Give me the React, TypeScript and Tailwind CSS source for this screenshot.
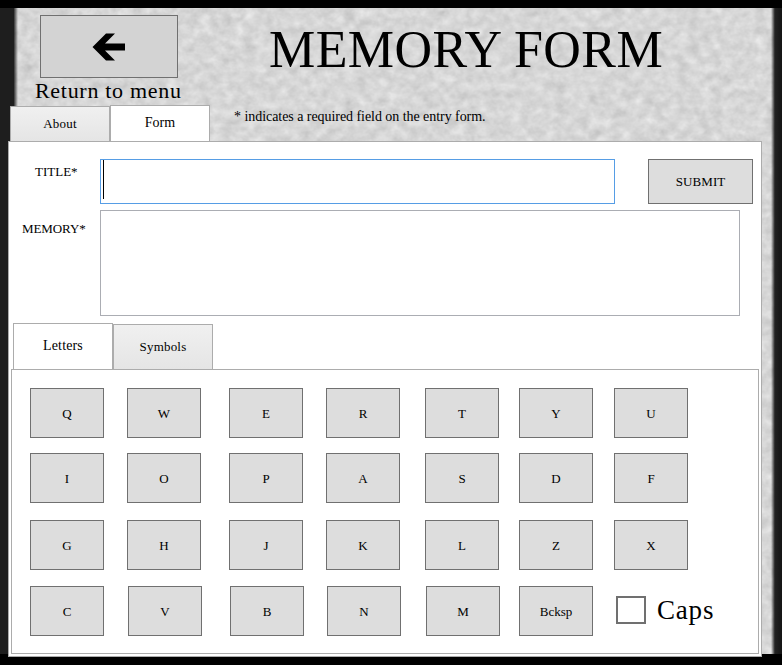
import React from "react";

type Key = { label: string; place: string };

const rows: { place: string; keys: Key[] }[] = [
  {
    place: "mt-[18px]",
    keys: [
      { label: "Q", place: "" },
      { label: "W", place: "ml-[23px]" },
      { label: "E", place: "ml-[28px]" },
      { label: "R", place: "ml-[23px]" },
      { label: "T", place: "ml-[25px]" },
      { label: "Y", place: "ml-[20px]" },
      { label: "U", place: "ml-[21px]" },
    ],
  },
  {
    place: "mt-[15px]",
    keys: [
      { label: "I", place: "" },
      { label: "O", place: "ml-[23px]" },
      { label: "P", place: "ml-[28px]" },
      { label: "A", place: "ml-[23px]" },
      { label: "S", place: "ml-[25px]" },
      { label: "D", place: "ml-[20px]" },
      { label: "F", place: "ml-[21px]" },
    ],
  },
  {
    place: "mt-[17px]",
    keys: [
      { label: "G", place: "" },
      { label: "H", place: "ml-[23px]" },
      { label: "J", place: "ml-[28px]" },
      { label: "K", place: "ml-[23px]" },
      { label: "L", place: "ml-[25px]" },
      { label: "Z", place: "ml-[20px]" },
      { label: "X", place: "ml-[21px]" },
    ],
  },
  {
    place: "mt-[16px]",
    keys: [
      { label: "C", place: "" },
      { label: "V", place: "ml-[24px]" },
      { label: "B", place: "ml-[28px]" },
      { label: "N", place: "ml-[23px]" },
      { label: "M", place: "ml-[25px]" },
      { label: "Bcksp", place: "ml-[19px]" },
    ],
  },
];

function StoneBackdrop() {
  return (
    <svg className="absolute inset-0" width="782" height="665" aria-hidden="true">
      <defs>
        <filter id="stone" x="0" y="0" width="100%" height="100%" colorInterpolationFilters="sRGB">
          <feTurbulence type="fractalNoise" baseFrequency="0.09 0.11" numOctaves="3" seed="8" />
          <feColorMatrix values="0.13 0.09 0.05 0 0.705  0.13 0.09 0.05 0 0.705  0.13 0.09 0.05 0 0.705  0 0 0 0 1" />
        </filter>
        <linearGradient id="leftEdge">
          <stop offset="0" stopColor="#1e1e1e" />
          <stop offset="0.75" stopColor="#1e1e1e" />
          <stop offset="1" stopColor="#1e1e1e" stopOpacity="0" />
        </linearGradient>
        <linearGradient id="rightEdge">
          <stop offset="0" stopColor="#222" stopOpacity="0" />
          <stop offset="0.35" stopColor="#222" />
          <stop offset="1" stopColor="#141414" />
        </linearGradient>
      </defs>
      <rect width="782" height="665" fill="#000" />
      <rect x="0" y="8" width="782" height="646" filter="url(#stone)" />
      <rect x="0" y="8" width="18" height="646" fill="url(#leftEdge)" />
      <rect x="771" y="8" width="11" height="646" fill="url(#rightEdge)" />
    </svg>
  );
}

export default function App() {
  return (
    <div className="relative h-[665px] w-[782px] overflow-hidden bg-black font-['Liberation_Serif',serif] text-[13px] leading-4 text-black">
      <StoneBackdrop />
      <div className="relative flex h-full flex-col pl-2">
        <header className="flex h-[141px] shrink-0">
          <div className="flex w-[202px] flex-col">
            <button className="mt-[15px] ml-8 flex h-[63px] w-[138px] shrink-0 items-center justify-center border border-[#707070] bg-[#d3d3d3]">
              <svg width="34" height="28" viewBox="0 0 34 28" className="mt-px" aria-hidden="true">
                <path d="M0.5 14 L14 0.5 H23 L13 10.5 H33 V17.5 H13 L23 27.5 H14 Z" />
              </svg>
            </button>
            <div className="mt-[1px] ml-[27px] h-6 text-[22px] leading-6 tracking-[0.7px] whitespace-nowrap">Return to menu</div>
            <div className="mt-auto ml-[2px] flex items-end">
              <div className="flex h-[35px] w-[100px] items-center justify-center border border-b-0 border-[#acacac] bg-linear-to-b from-[#f0f0f0] to-[#e5e5e5] tracking-[0.2px]">
                About
              </div>
              <div className="flex h-9 w-[100px] items-center justify-center border border-b-0 border-[#acacac] bg-white pb-[2px] text-[14px]">
                Form
              </div>
            </div>
          </div>
          <div className="flex flex-col">
            <h1 className="mt-5 ml-[59px] h-[60px] text-[52px] leading-[60px] tracking-[0.4px] whitespace-nowrap">MEMORY FORM</h1>
            <p className="mt-[29px] ml-6 text-[14px] leading-4 tracking-[-0.05px] whitespace-nowrap">
              * indicates a required field on the entry form.
            </p>
          </div>
        </header>

        <main className="flex h-[516px] w-[754px] shrink-0 flex-col border border-[#acacac] bg-white">
          <div className="mt-[17px] flex">
            <div className="mt-[5px] w-[91px] pl-[26px]">TITLE*</div>
            <div className="h-[45px] w-[515px] border border-[#569de5] pl-[2px]">
              <div className="h-[39px] w-px bg-black" />
            </div>
            <button className="ml-[33px] h-[45px] w-[105px] border border-[#707070] bg-[#dddddd] tracking-[0.1px]">SUBMIT</button>
          </div>
          <div className="mt-[6px] flex">
            <div className="mt-[11px] w-[91px] pl-[13px] tracking-[-0.1px]">MEMORY*</div>
            <div className="h-[106px] w-[640px] border border-[#abadb3]" />
          </div>
          <div className="mt-[7px] ml-1 flex items-end">
            <div className="flex h-[46px] w-[100px] items-center justify-center border border-b-0 border-[#acacac] bg-white pb-[2px] text-[14px] tracking-[0.15px]">
              Letters
            </div>
            <div className="flex h-[45px] w-[100px] items-center justify-center border border-b-0 border-[#acacac] bg-linear-to-b from-[#f0f0f0] to-[#e5e5e5] tracking-[0.2px]">
              Symbols
            </div>
          </div>
          <section className="ml-[2px] flex h-[285px] w-[748px] flex-col border border-[#acacac] pl-[18px]">
            {rows.map((row) => (
              <div key={row.keys[0].label} className={"flex items-center " + row.place}>
                {row.keys.map((key) => (
                  <button
                    key={key.label}
                    className={"h-[50px] w-[74px] shrink-0 border border-[#707070] bg-[#dddddd] pt-px " + key.place}
                  >
                    {key.label}
                  </button>
                ))}
                {row.keys.length === 6 && (
                  <label className="ml-[23px] flex items-center pb-[3px]">
                    <span className="mt-px h-7 w-[30px] border-2 border-[#707070] bg-white" />
                    <span className="ml-[11px] text-[27px] leading-7 tracking-[0.8px]">Caps</span>
                  </label>
                )}
              </div>
            ))}
          </section>
        </main>
      </div>
    </div>
  );
}
